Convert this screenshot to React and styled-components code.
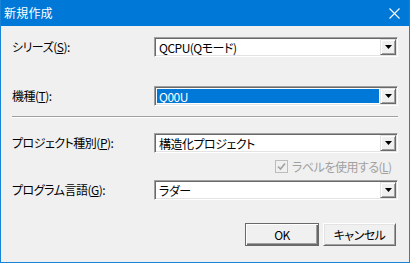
import React from "react";
import styled, { createGlobalStyle } from "styled-components";

const Global = createGlobalStyle`
  html, body { margin: 0; padding: 0; background: #f0f0f0; }
  body {
    font-family: "Noto Sans CJK JP", "Noto Sans", sans-serif;
    font-size: 12px;
    font-feature-settings: "palt";
    letter-spacing: -0.5px;
  }
  * { box-sizing: border-box; }
`;

const Window = styled.div`
  width: 410px;
  height: 263px;
  border: 1px solid #1883d7;
  border-top: none;
  background: #f0f0f0;
  display: flex;
  flex-direction: column;
  overflow: hidden;
`;

const TitleBar = styled.div`
  height: 26px;
  background: #0078d7;
  color: #fff;
  display: flex;
  align-items: center;
  justify-content: space-between;
  padding: 0 0 0 4px;
  margin: 0 -1px;
`;

const Title = styled.span`
  font-size: 12px;
  line-height: 16px;
  letter-spacing: 0.2px;
  font-feature-settings: normal;
`;

const CloseBtn = styled.div`
  width: 32px;
  height: 26px;
  display: flex;
  align-items: center;
  justify-content: center;
`;

const Body = styled.div`
  flex: 1;
  display: flex;
  flex-direction: column;
  padding: 11px 11px 0 11px;
`;

const Row = styled.div`
  display: grid;
  grid-template-columns: 142px 1fr;
  align-items: center;
  height: 20px;
  margin-top: ${(p) => p.$mt || 0}px;
`;

const Label = styled.span`
  color: #000;
  font-size: 12px;
  line-height: 16px;
  white-space: nowrap;
`;

const Accel = styled.span`
  text-decoration: underline;
`;

const Combo = styled.div`
  height: 20px;
  display: flex;
  align-items: stretch;
  background: #fff;
  border-top: 1px solid #a0a0a0;
  border-left: 1px solid #a0a0a0;
  border-right: 1px solid #fff;
  border-bottom: 1px solid #fff;
  box-shadow: inset 1px 1px 0 #696969, inset -1px -1px 0 #e3e3e3;
  padding: 1px;
`;

const ComboText = styled.div`
  flex: 1;
  display: flex;
  align-items: center;
  padding-left: 2px;
  margin: 1px;
  font-size: 12px;
  line-height: 15px;
  color: ${(p) => (p.$selected ? "#fff" : "#000")};
  background: ${(p) => (p.$selected ? "#0078d7" : "transparent")};
  white-space: nowrap;
`;

const DropBtn = styled.div`
  width: 16px;
  background: #f0f0f0;
  border-top: 1px solid #e3e3e3;
  border-left: 1px solid #e3e3e3;
  border-right: 1px solid #696969;
  border-bottom: 1px solid #696969;
  box-shadow: inset 1px 1px 0 #fff, inset -1px -1px 0 #a0a0a0;
  display: flex;
  align-items: center;
  justify-content: center;
`;

const Arrow = () => (
  <svg width="7" height="4" viewBox="0 0 7 4">
    <path d="M0 0h7L3.5 4z" fill="#000" />
  </svg>
);

const Separator = styled.div`
  height: 2px;
  margin-top: ${(p) => p.$mt}px;
  border-top: 1px solid #a0a0a0;
  border-bottom: 1px solid #fff;
`;

const CheckRow = styled.div`
  display: flex;
  align-items: center;
  padding-left: 263px;
  margin-top: 7px;
  height: 13px;
  gap: 4px;
`;

const CheckBox = styled.div`
  width: 13px;
  height: 13px;
  border: 1px solid #bcbcbc;
  background: #f0f0f0;
  display: flex;
  align-items: center;
  justify-content: center;
`;

const CheckLabel = styled.span`
  color: #a0a0a0;
  font-size: 12px;
  line-height: 13px;
  white-space: nowrap;
`;

const Buttons = styled.div`
  display: flex;
  justify-content: flex-end;
  gap: 4px;
  margin-top: 23px;
  padding-right: 2px;
`;

const Button = styled.div`
  width: ${(p) => p.$w}px;
  height: 23px;
  background: #f0f0f0;
  display: flex;
  align-items: center;
  justify-content: center;
  font-size: 12px;
  line-height: 15px;
  color: #000;
  border-top: 1px solid ${(p) => (p.$default ? "#696969" : "#fff")};
  border-left: 1px solid ${(p) => (p.$default ? "#696969" : "#fff")};
  border-right: 1px solid #696969;
  border-bottom: 1px solid #696969;
  box-shadow: ${(p) =>
    p.$default
      ? "inset 1px 1px 0 #fff, inset -1px -1px 0 #696969, inset -2px -2px 0 #a0a0a0"
      : "inset 1px 1px 0 #e3e3e3, inset -1px -1px 0 #a0a0a0"};
`;

const FieldRow = ({ label, accel, value, selected, mt }) => (
  <Row $mt={mt}>
    <Label>
      {label}(<Accel>{accel}</Accel>):
    </Label>
    <Combo>
      <ComboText $selected={selected}>{value}</ComboText>
      <DropBtn>
        <Arrow />
      </DropBtn>
    </Combo>
  </Row>
);

export default function App() {
  return (
    <>
      <Global />
      <Window>
        <TitleBar>
          <Title>新規作成</Title>
          <CloseBtn>
            <svg width="11" height="11" viewBox="0 0 11 11">
              <path d="M0.5 0.5L10.5 10.5M10.5 0.5L0.5 10.5" stroke="#fff" strokeWidth="1.1" />
            </svg>
          </CloseBtn>
        </TitleBar>
        <Body>
          <FieldRow label="シリーズ" accel="S" value="QCPU(Qモード)" />
          <FieldRow label="機種" accel="T" value="Q00U" selected mt={29} />
          <Separator $mt={10} />
          <FieldRow label="プロジェクト種別" accel="P" value="構造化プロジェクト" mt={15} />
          <CheckRow>
            <CheckBox>
              <svg width="9" height="9" viewBox="0 0 9 9">
                <path d="M1 4.5L3.5 7L8 1.5" stroke="#a0a0a0" strokeWidth="1.6" fill="none" />
              </svg>
            </CheckBox>
            <CheckLabel>
              ラベルを使用する(<Accel>L</Accel>)
            </CheckLabel>
          </CheckRow>
          <FieldRow label="プログラム言語" accel="G" value="ラダー" mt={7} />
          <Buttons>
            <Button $w={74} $default>OK</Button>
            <Button $w={73}>キャンセル</Button>
          </Buttons>
        </Body>
      </Window>
    </>
  );
}
